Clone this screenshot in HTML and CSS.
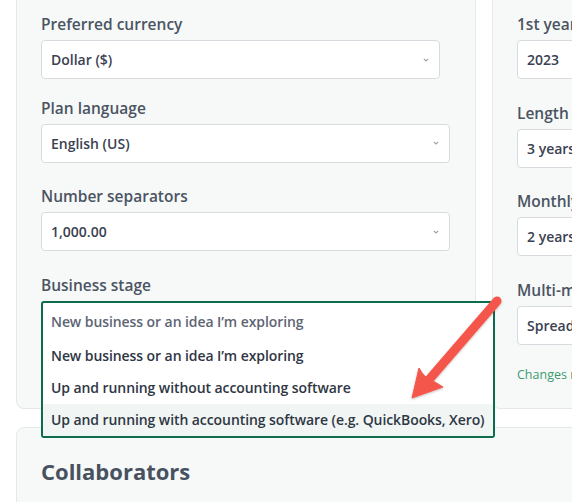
FILE: index.html
```html
<!DOCTYPE html>
<html lang="en">
<head>
<meta charset="utf-8">
<title>Plan settings</title>
<link rel="stylesheet" href="styles.css">
</head>
<body>
<div class="page">
  <div class="row">
    <section class="card card-left">
      <div class="field">
        <div class="label">Preferred currency</div>
        <div class="select select-narrow"><span>Dollar ($)</span><svg class="chev" width="6" height="4" viewBox="0 0 6 4"><path d="M0.8 0.9 L3 3 L5.2 0.9" fill="none" stroke="#9aa1a8" stroke-width="1.1"/></svg></div>
      </div>
      <div class="field field-tight">
        <div class="label">Plan language</div>
        <div class="select"><span>English (US)</span><svg class="chev" width="6" height="4" viewBox="0 0 6 4"><path d="M0.8 0.9 L3 3 L5.2 0.9" fill="none" stroke="#9aa1a8" stroke-width="1.1"/></svg></div>
      </div>
      <div class="field">
        <div class="label">Number separators</div>
        <div class="select"><span>1,000.00</span><svg class="chev" width="6" height="4" viewBox="0 0 6 4"><path d="M0.8 0.9 L3 3 L5.2 0.9" fill="none" stroke="#9aa1a8" stroke-width="1.1"/></svg></div>
      </div>
      <div class="field field-open">
        <div class="label">Business stage</div>
        <div class="combo">
          <div class="dropdown">
            <div class="dd-value">New business or an idea I’m exploring</div>
            <div class="dd-option">New business or an idea I’m exploring</div>
            <div class="dd-option">Up and running without accounting software</div>
            <div class="dd-option dd-hover">Up and running with accounting software (e.g. QuickBooks, Xero)</div>
          </div>
        </div>
      </div>
    </section>
    <section class="card card-right">
      <div class="field">
        <div class="label">1st year of plan</div>
        <div class="select"><span>2023</span></div>
      </div>
      <div class="field">
        <div class="label">Length of plan</div>
        <div class="select"><span>3 years</span></div>
      </div>
      <div class="field">
        <div class="label">Monthly detail</div>
        <div class="select"><span>2 years</span></div>
      </div>
      <div class="field">
        <div class="label">Multi-month periods</div>
        <div class="select"><span>Spread evenly</span></div>
      </div>
      <p class="note">Changes may take a moment to apply</p>
    </section>
  </div>
  <section class="card card-wide">
    <h2 class="heading">Collaborators</h2>
  </section>
</div>
<svg class="annotation" width="572" height="502" viewBox="0 0 572 502">
  <defs>
    <filter id="sh" x="-20%" y="-20%" width="140%" height="140%">
      <feDropShadow dx="0" dy="1" stdDeviation="1.2" flood-color="#000" flood-opacity="0.25"/>
    </filter>
  </defs>
  <g filter="url(#sh)" fill="#f4574b" stroke="#f4574b">
    <line x1="497" y1="301" x2="427" y2="382" stroke-width="9" stroke-linecap="round"/>
    <path d="M412 398 L419 368 Q424 377 429 379 Q437 383 443 387 Z" stroke-width="1" stroke-linejoin="round"/>
  </g>
</svg>
</body>
</html>
```
FILE: styles.css
```css
html, body {
  margin: 0;
  padding: 0;
}
body {
  width: 572px;
  height: 502px;
  overflow: hidden;
  background: #ffffff;
  font-family: "Open Sans", "Lato", sans-serif;
  position: relative;
}
.page {
  padding-left: 16px;
  width: 900px;
}
.row {
  display: flex;
  align-items: stretch;
  gap: 16px;
}
.card {
  background: #f7f9f9;
  border: 1px solid #e5e8ea;
  border-radius: 8px;
  box-sizing: border-box;
}
.card-left {
  width: 460px;
  border-top: 0;
  border-radius: 0 0 8px 8px;
  padding: 14px 25px 0 24px;
}
.card-right {
  width: 300px;
  border-top: 0;
  border-radius: 0 0 8px 8px;
  padding: 14px 24px 25px 24px;
}
.field + .field {
  margin-top: 23.5px;
}
.field.field-tight {
  margin-top: 18.5px;
}
.label {
  font-size: 15.5px;
  line-height: 20px;
  font-weight: 600;
  color: #4b5462;
  margin-bottom: 6px;
  white-space: nowrap;
}
.select {
  height: 39px;
  box-sizing: border-box;
  border: 1px solid #d7dbdf;
  border-radius: 4px;
  background: #ffffff;
  display: flex;
  align-items: center;
  justify-content: space-between;
  padding: 0 10px 0 9px;
  font-size: 14px;
  font-weight: 600;
  color: #3a4150;
  white-space: nowrap;
  overflow: hidden;
}
.select-narrow {
  margin-right: 10px;
}
.chev {
  display: block;
  flex: none;
}
.combo {
  position: relative;
  height: 39px;
}
.dropdown {
  position: absolute;
  top: 0;
  left: 0;
  width: 454px;
  box-sizing: border-box;
  border: 2px solid #0d6b4e;
  border-radius: 3px;
  background: #ffffff;
  z-index: 5;
  font-size: 14px;
  letter-spacing: -0.08px;
  font-weight: 600;
  white-space: nowrap;
}
.dd-value {
  height: 37px;
  line-height: 37px;
  padding-left: 8px;
  color: #5d6573;
}
.dd-option {
  height: 32px;
  line-height: 32px;
  padding-left: 8px;
  color: #2f3644;
}
.dd-hover {
  background: #f1f6f4;
}
.note {
  margin: 22px 0 0;
  font-size: 12.5px;
  line-height: 16px;
  color: #3c9a70;
  white-space: nowrap;
}
.card-wide {
  margin-top: 18px;
  width: 700px;
  height: 120px;
  padding: 28px 24px 0;
}
.heading {
  margin: 0;
  font-size: 22px;
  line-height: 30px;
  font-weight: 700;
  color: #48525f;
}
.annotation {
  position: absolute;
  left: 0;
  top: 0;
  z-index: 10;
  pointer-events: none;
}
```
